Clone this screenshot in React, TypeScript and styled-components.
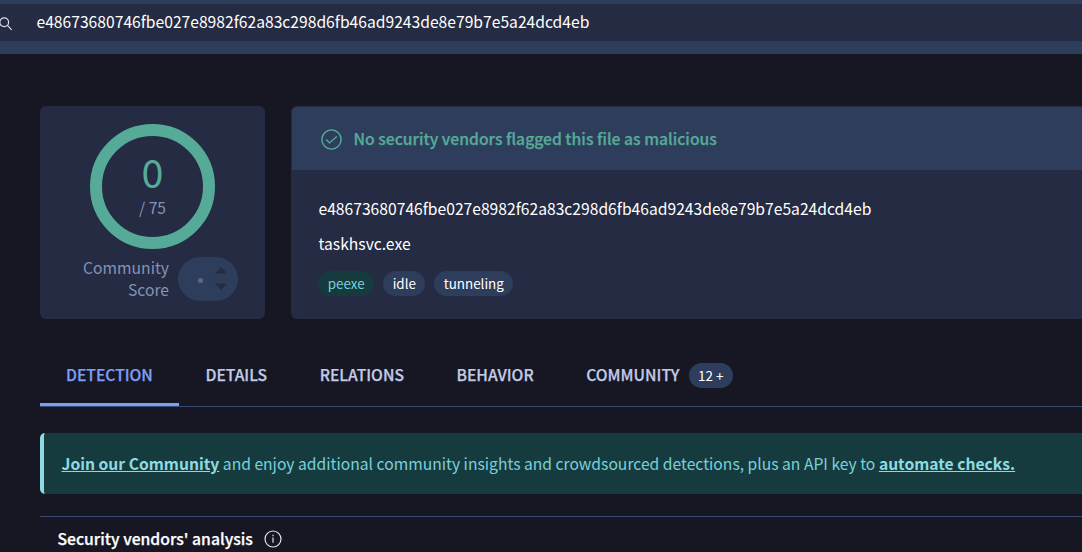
import React from 'react';
import styled, { createGlobalStyle, css } from 'styled-components';

const HASH = 'e48673680746fbe027e8982f62a83c298d6fb46ad9243de8e79b7e5a24dcd4eb';

const color = {
  page: '#171623',
  panel: '#242b42',
  raised: '#2f3d5c',
  line: '#3a4b70',
  green: '#55ab98',
  muted: '#8493b5',
  text: '#ffffff',
  tab: '#c0cbe8',
  accent: '#7c9ef5',
  cyan: '#79d0dc',
  cyanStrong: '#8cdbe3',
  teal: '#163b3e',
};

const GlobalStyle = createGlobalStyle`
  *, *::before, *::after { box-sizing: border-box; }
  body {
    margin: 0;
    height: 552px;
    overflow: hidden;
    background: ${color.page};
    color: ${color.text};
    font-family: "Noto Sans CJK SC", "Noto Sans", sans-serif;
    font-size: 15.66px;
    line-height: 22px;
  }
`;

/* Between the medium and bold cuts of the typeface. */
const semibold = css`
  font-weight: 500;
  -webkit-text-stroke: 0.25px currentColor;
`;

const Page = styled.div`
  height: 552px;
  overflow: hidden;
`;

const TopBar = styled.header`
  height: 54px;
  padding: 4px 0 13px;
  background: ${color.raised};
`;

const SearchField = styled.div`
  display: flex;
  align-items: center;
  height: 37px;
  gap: 23.5px;
  background: ${color.panel};

  svg { flex: none; margin: 2px 0 0 -2px; }
`;

const Hash = styled.span`
  padding-bottom: 2px;
  font-size: 15.67px;
  white-space: nowrap;
`;

const Main = styled.main`
  padding: 52px 0 0 40px;
`;

const Summary = styled.section`
  display: grid;
  grid-template-columns: 225px 1fr;
  gap: 26px;
  height: 213px;
`;

const ScoreCard = styled.div`
  display: flex;
  flex-direction: column;
  align-items: center;
  padding-top: 18px;
  border-radius: 6px;
  background: ${color.panel};
`;

const Ring = styled.div`
  display: flex;
  flex-direction: column;
  align-items: center;
  width: 125px;
  height: 125px;
  padding-top: 16px;
  border: 12.5px solid ${color.green};
  border-radius: 50%;
`;

const Positives = styled.div`
  color: ${color.green};
  font-size: 39.5px;
  font-weight: 400;
  line-height: 37px;
`;

const Total = styled.div`
  margin-top: 8px;
  color: ${color.muted};
  line-height: 22px;
`;

const Community = styled.div`
  display: flex;
  align-items: flex-start;
  gap: 9px;
  margin-top: 8px;
  padding-left: 16px;
`;

const CommunityLabel = styled.div`
  width: 87px;
  margin-left: -1px;
  color: ${color.muted};
  text-align: right;
`;

const Votes = styled.div`
  display: flex;
  align-items: center;
  justify-content: flex-end;
  gap: 12px;
  width: 60px;
  height: 44px;
  padding-right: 11px;
  border-radius: 22px;
  background: ${color.raised};
`;

const VoteDot = styled.i`
  width: 5px;
  height: 5px;
  margin-top: 3px;
  border-radius: 50%;
  background: #5e6a85;
`;

const FileCard = styled.div`
  border: 1px solid ${color.panel};
  border-right: 0;
  border-radius: 6px 0 0 6px;
  overflow: hidden;
  background: ${color.panel};
`;

const Verdict = styled.div`
  display: flex;
  align-items: center;
  gap: 12px;
  height: 63px;
  padding: 1px 0 0 28.5px;
  background: ${color.raised};
  color: ${color.green};
  font-size: 15.73px;
  ${semibold}
`;

const FileInfo = styled.div`
  display: flex;
  flex-direction: column;
  padding: 28px 26px 0 26.5px;
`;

const FileName = styled.div`
  margin-top: 11px;
`;

const Tags = styled.div`
  display: flex;
  gap: 9px;
  margin-top: 16px;
  margin-left: -0.5px;
`;

const pill = css`
  display: flex;
  align-items: center;
  justify-content: center;
  height: 25px;
  border-radius: 13px;
  background: ${color.raised};
  font-size: 13.4px;
`;

const Tag = styled.span<{ $width: number; $teal?: boolean }>`
  ${pill}
  width: ${(p) => p.$width}px;
  padding: 0 0 1px 0.5px;
  ${(p) => p.$teal && css`
    background: ${color.teal};
    color: ${color.cyan};
  `}
`;

const Tabs = styled.nav`
  display: flex;
  height: 62px;
  margin-top: 26px;
  border-bottom: 1px solid ${color.line};
`;

const Tab = styled.a<{ $active?: boolean }>`
  display: flex;
  align-items: center;
  gap: 9.3px;
  height: 61px;
  padding: 2px 26.6px 0 26px;
  border-bottom: 3px solid ${(p) => (p.$active ? color.accent : 'transparent')};
  color: ${(p) => (p.$active ? color.accent : color.tab)};
  ${semibold}
`;

const Count = styled.span`
  ${pill}
  width: 44px;
  color: ${color.text};
  font-weight: 400;
  -webkit-text-stroke: 0;
`;

const Callout = styled.p`
  display: flex;
  align-items: center;
  height: 61px;
  margin: 26px 0 22px;
  padding: 1px 0 0 17.5px;
  border-left: 4px solid ${color.cyanStrong};
  border-radius: 5px 0 0 5px;
  background: ${color.teal};
  color: ${color.cyan};
  white-space: pre;
`;

const Link = styled.a`
  color: ${color.cyanStrong};
  font-weight: 700;
  text-decoration: underline;
`;

const Analysis = styled.section`
  display: flex;
  align-items: center;
  gap: 11px;
  height: 44px;
  padding-left: 17.5px;
  border-top: 1px solid ${color.line};
`;

const Heading = styled.h2`
  margin: 0;
  font-size: 15.74px;
  ${semibold}
`;

const SearchIcon = () => (
  <svg width="15" height="14" viewBox="0 0 15 14" fill="none" stroke="#dce0ea" strokeWidth="1.2">
    <circle cx="6.2" cy="5.2" r="4.4" />
    <path d="M9.4 8.4 13.7 12.8" />
  </svg>
);

const CheckIcon = () => (
  <svg width="21" height="21" viewBox="0 0 21 21" fill="none" stroke={color.green} strokeWidth="1.4">
    <circle cx="10.5" cy="10.5" r="9.6" />
    <path d="m5.2 10.6 3.3 3.3L15.8 7.4" />
  </svg>
);

const InfoIcon = () => (
  <svg width="18" height="18" viewBox="0 0 18 18" fill="none" stroke="#e4e5ea" strokeWidth="1.2">
    <circle cx="9" cy="9" r="8" />
    <path d="M9 7.5v5.3M9 4.8v1.5" />
  </svg>
);

const VoteArrows = () => (
  <svg width="12" height="24" viewBox="0 0 12 24" fill={color.panel}>
    <path d="M0 6.5 6 0l6 6.5zM0 16.5h12L6 23z" />
  </svg>
);

const tabs = [
  { label: 'DETECTION', active: true },
  { label: 'DETAILS' },
  { label: 'RELATIONS' },
  { label: 'BEHAVIOR' },
  { label: 'COMMUNITY', count: '12 +' },
];

export default function App() {
  return (
    <Page>
      <GlobalStyle />
      <TopBar>
        <SearchField>
          <SearchIcon />
          <Hash>{HASH}</Hash>
        </SearchField>
      </TopBar>
      <Main>
        <Summary>
          <ScoreCard>
            <Ring>
              <Positives>0</Positives>
              <Total>/ 75</Total>
            </Ring>
            <Community>
              <CommunityLabel>Community Score</CommunityLabel>
              <Votes>
                <VoteDot />
                <VoteArrows />
              </Votes>
            </Community>
          </ScoreCard>
          <FileCard>
            <Verdict>
              <CheckIcon />
              <span>No security vendors flagged this file as malicious</span>
            </Verdict>
            <FileInfo>
              <Hash>{HASH}</Hash>
              <FileName>taskhsvc.exe</FileName>
              <Tags>
                <Tag $width={56} $teal>peexe</Tag>
                <Tag $width={42}>idle</Tag>
                <Tag $width={79}>tunneling</Tag>
              </Tags>
            </FileInfo>
          </FileCard>
        </Summary>
        <Tabs>
          {tabs.map((t) => (
            <Tab key={t.label} $active={t.active}>
              {t.label}
              {t.count && <Count>{t.count}</Count>}
            </Tab>
          ))}
        </Tabs>
        <Callout>
          <Link>Join our Community</Link>
          {' and enjoy additional community insights and crowdsourced detections, plus an API key to '}
          <Link>automate checks.</Link>
        </Callout>
        <Analysis>
          <Heading>Security vendors' analysis</Heading>
          <InfoIcon />
        </Analysis>
      </Main>
    </Page>
  );
}
